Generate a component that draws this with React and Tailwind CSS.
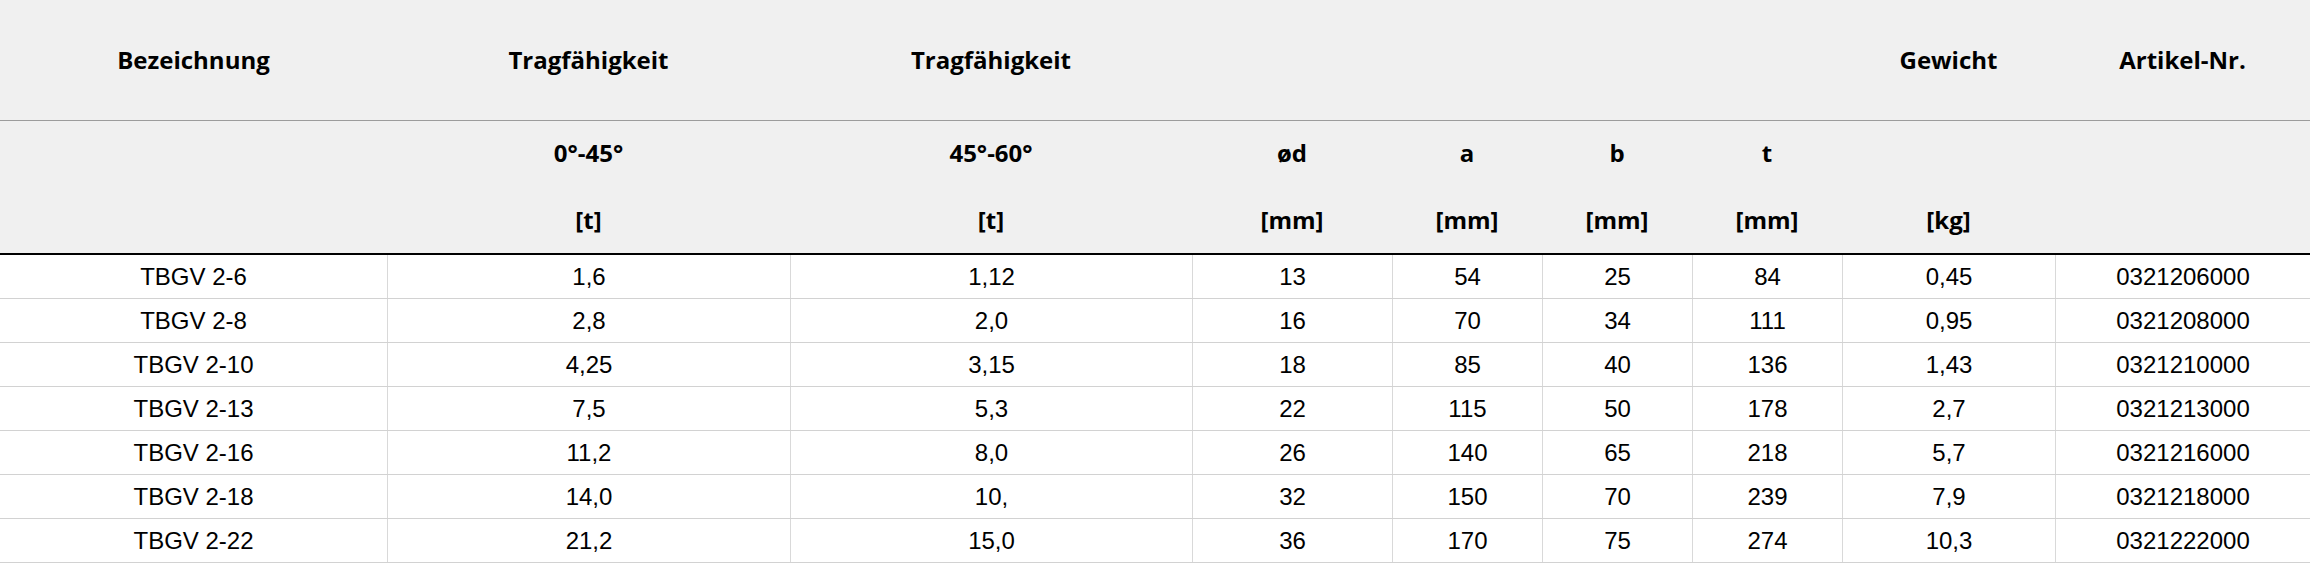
const cols = "grid grid-cols-[387px_403px_402px_200px_150px_150px_150px_213px_255px]";

const headTop = ["Bezeichnung", "Tragfähigkeit", "Tragfähigkeit", "", "", "", "", "Gewicht", "Artikel-Nr."];
const headSub = [
  ["", ""],
  ["0°-45°", "[t]"],
  ["45°-60°", "[t]"],
  ["ød", "[mm]"],
  ["a", "[mm]"],
  ["b", "[mm]"],
  ["t", "[mm]"],
  ["", "[kg]"],
  ["", ""],
];

const rows = [
  ["TBGV 2-6", "1,6", "1,12", "13", "54", "25", "84", "0,45", "0321206000"],
  ["TBGV 2-8", "2,8", "2,0", "16", "70", "34", "111", "0,95", "0321208000"],
  ["TBGV 2-10", "4,25", "3,15", "18", "85", "40", "136", "1,43", "0321210000"],
  ["TBGV 2-13", "7,5", "5,3", "22", "115", "50", "178", "2,7", "0321213000"],
  ["TBGV 2-16", "11,2", "8,0", "26", "140", "65", "218", "5,7", "0321216000"],
  ["TBGV 2-18", "14,0", "10,", "32", "150", "70", "239", "7,9", "0321218000"],
  ["TBGV 2-22", "21,2", "15,0", "36", "170", "75", "274", "10,3", "0321222000"],
];

const App = () => {
  return (
    <div className="w-[2310px] min-h-[565px] bg-white text-black">
      <div className="bg-[#f0f0f0] font-['Open_Sans',sans-serif] font-bold text-[24px] leading-[36px]">
        <div className={`${cols} h-[121px] border-b border-[#9c9c9c]`}>
          {headTop.map((t, i) => (
            <div key={i} className="flex items-center justify-center">
              {t}
            </div>
          ))}
        </div>
        <div className={`${cols} h-[134px] border-b-2 border-black`}>
          {headSub.map(([a, b], i) => (
            <div key={i} className="flex flex-col items-center pt-[14px] gap-[31px]">
              <span className="h-[36px]">{a}</span>
              <span className="h-[36px]">{b}</span>
            </div>
          ))}
        </div>
      </div>

      <div className="font-['Liberation_Sans',Arial,sans-serif] text-[24px]">
        {rows.map((r, ri) => (
          <div key={ri} className={`${cols} h-[44px] border-b border-[#d2d2d2]`}>
            {r.map((c, ci) => (
              <div
                key={ci}
                className={`flex items-center justify-center ${ci > 0 ? "border-l border-[#d9d9d9]" : ""}`}
              >
                {c}
              </div>
            ))}
          </div>
        ))}
      </div>
    </div>
  );
};

export default App;
